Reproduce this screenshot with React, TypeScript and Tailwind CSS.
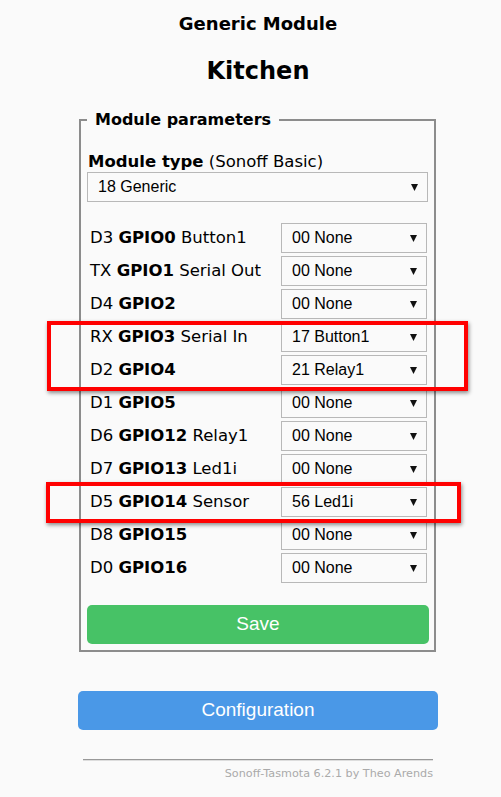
import React from "react";

const rows: { pre: string; gpio: string; post: string; val: string }[] = [
  { pre: "D3", gpio: "GPIO0", post: "Button1", val: "00 None" },
  { pre: "TX", gpio: "GPIO1", post: "Serial Out", val: "00 None" },
  { pre: "D4", gpio: "GPIO2", post: "", val: "00 None" },
  { pre: "RX", gpio: "GPIO3", post: "Serial In", val: "17 Button1" },
  { pre: "D2", gpio: "GPIO4", post: "", val: "21 Relay1" },
  { pre: "D1", gpio: "GPIO5", post: "", val: "00 None" },
  { pre: "D6", gpio: "GPIO12", post: "Relay1", val: "00 None" },
  { pre: "D7", gpio: "GPIO13", post: "Led1i", val: "00 None" },
  { pre: "D5", gpio: "GPIO14", post: "Sensor", val: "56 Led1i" },
  { pre: "D8", gpio: "GPIO15", post: "", val: "00 None" },
  { pre: "D0", gpio: "GPIO16", post: "", val: "00 None" },
];

function Select({ value, className }: { value: string; className: string }) {
  return (
    <div
      className={
        "flex items-center justify-between border border-[#b8b8b8] bg-[#fafafa] h-[30px] pl-[10px] pr-[9px] text-[16px] text-black " +
        className
      }
      style={{ fontFamily: '"Liberation Sans", Arial, sans-serif' }}
    >
      <span>{value}</span>
      <svg width="7" height="8" viewBox="0 0 7 8">
        <path d="M0 1 H7 L3.5 8 Z" fill="#111" />
      </svg>
    </div>
  );
}

export default function App() {
  return (
    <div
      className="relative min-h-[797px] w-[501px] bg-[#fafafa] text-black"
      style={{ fontFamily: '"DejaVu Sans", Verdana, sans-serif' }}
    >
      <div className="ml-[78px] w-[360px] pt-[12px]">
        <div className="text-center text-[18px] font-bold leading-[24px]">Generic Module</div>
        <div className="mt-[20px] text-center text-[24px] font-bold leading-[30px]">Kitchen</div>

        <fieldset className="ml-[1px] mt-[24px] w-[356px] border-2 border-[#8c8c8c] pl-[6px] pr-[5px] pb-[6px]">
          <legend className="px-[8px] text-[16px] font-bold leading-[20px]">Module parameters</legend>
          <div className="mt-[22px] text-[16.5px] leading-[20px] pl-[1px]">
            <b>Module type</b> (Sonoff Basic)
          </div>
          <Select value="18 Generic" className="w-[341px]" />
          <div className="mt-[21px] flex flex-col gap-[3px]">
            {rows.map((r) => (
              <div key={r.gpio} className="flex items-center">
                <div className="w-[194px] pl-[3px] text-[16.5px]">
                  {r.pre} <b>{r.gpio}</b>
                  {r.post ? " " + r.post : ""}
                </div>
                <Select value={r.val} className="w-[146px]" />
              </div>
            ))}
          </div>
          <button
            className="mt-[22px] h-[39px] w-[342px] rounded-[5px] bg-[#47c266] text-[19px] text-white"
            style={{ fontFamily: '"Liberation Sans", Arial, sans-serif' }}
          >
            Save
          </button>
        </fieldset>

        <button
          className="mt-[39px] h-[39px] w-[360px] rounded-[5px] bg-[#4a98e7] text-[19px] text-white"
          style={{ fontFamily: '"Liberation Sans", Arial, sans-serif' }}
        >
          Configuration
        </button>

        <div className="ml-[5px] mt-[29px] w-[350px]">
          <div className="h-[2px] border-t border-[#999] bg-[#ddd]" />
          <div className="mt-[5px] text-right text-[11.2px] text-[#aaa]">Sonoff-Tasmota 6.2.1 by Theo Arends</div>
        </div>
      </div>

      <div className="absolute left-[47px] top-[321px] h-[70px] w-[421px] border-4 border-[#ff0000] shadow-[1px_2px_4px_rgba(0,0,0,0.45)]" />
      <div className="absolute left-[46px] top-[482px] h-[41px] w-[415px] border-4 border-[#ff0000] shadow-[1px_2px_4px_rgba(0,0,0,0.45)]" />
    </div>
  );
}
